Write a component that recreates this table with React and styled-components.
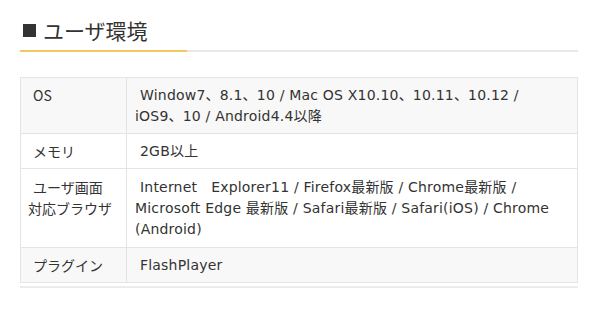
import React from "react";
import styled, { createGlobalStyle } from "styled-components";

const Global = createGlobalStyle`
  html, body { margin: 0; padding: 0; background: #ffffff; }
  body { font-family: "DejaVu Sans", "Noto Sans CJK JP", sans-serif; color: #333333; }
`;

const Page = styled.div`
  width: 558px;
  padding: 15px 0 0 20px;
`;

const Heading = styled.h2`
  display: flex;
  align-items: center;
  margin: 0;
  padding: 0 0 5px 3px;
  font-family: "Noto Sans CJK JP", sans-serif;
  font-weight: 400;
  font-size: 21px;
  line-height: 30px;
  color: #333333;
  white-space: nowrap;
`;

const Square = styled.span`
  display: inline-block;
  width: 13px;
  height: 13px;
  margin: 1px 7px 0 0;
  background: #333333;
`;

const Rule = styled.div`
  position: relative;
  height: 2px;
  background: #e8e8e8;
  &::before {
    content: "";
    position: absolute;
    left: 0;
    top: 0;
    height: 2px;
    width: 167px;
    background: #f5c760;
  }
`;

const Table = styled.table`
  margin-top: 25px;
  width: 558px;
  border-collapse: collapse;
  table-layout: fixed;
  font-size: 14px;
  line-height: 21px;
`;

const Row = styled.tr`
  background: ${(p) => (p.$shaded ? "#f8f8f8" : "#ffffff")};
`;

const Cell = styled.td`
  border: 1px solid #e4e4e4;
  padding: ${(p) => (p.$tall ? "8px" : "7px")} 8px ${(p) => (p.$tall ? "7px" : "6px")}
    ${(p) => (p.$label ? "7px" : "8px")};
  text-indent: 5px;
  vertical-align: top;
  white-space: nowrap;
  color: #333333;
  letter-spacing: ${(p) => (p.$label ? "0" : "0.2px")};
  font-family: ${(p) =>
    p.$label ? `"Noto Sans CJK JP", sans-serif` : `"DejaVu Sans", "Noto Sans CJK JP", sans-serif`};
`;

const Line = styled.span`
  display: block;
  height: 21px;
`;

const LabelCol = styled.col`
  width: 106px;
`;

const BottomLine = styled.div`
  margin-top: 3px;
  height: 2px;
  width: 558px;
  background: #ececec;
`;

const rows = [
  {
    label: "OS",
    value: ["Window7、8.1、10 / Mac OS X10.10、10.11、10.12 /", "iOS9、10 / Android4.4以降"],
    shaded: true,
  },
  { label: "メモリ", value: ["2GB以上"], shaded: false },
  {
    label: ["ユーザ画面", "対応ブラウザ"],
    value: [
      "Internet\u00a0\u00a0\u00a0Explorer11 / Firefox最新版 / Chrome最新版 /",
      "Microsoft Edge 最新版 / Safari最新版 / Safari(iOS) / Chrome",
      "(Android)",
    ],
    shaded: false,
    tall: true,
  },
  { label: "プラグイン", value: ["FlashPlayer"], shaded: true },
];

const lines = (arr) =>
  (Array.isArray(arr) ? arr : [arr]).map((t, i) => (
    <Line key={i} style={i > 0 ? { textIndent: 0 } : undefined}>
      {t}
    </Line>
  ));

export default function App() {
  return (
    <>
      <Global />
      <Page>
        <Heading>
          <Square />
          ユーザ環境
        </Heading>
        <Rule />
        <Table>
          <colgroup>
            <LabelCol />
            <col />
          </colgroup>
          <tbody>
            {rows.map((r, i) => (
              <Row key={i} $shaded={r.shaded}>
                <Cell $label $tall={r.tall}>{lines(r.label)}</Cell>
                <Cell $tall={r.tall}>{lines(r.value)}</Cell>
              </Row>
            ))}
          </tbody>
        </Table>
        <BottomLine />
      </Page>
    </>
  );
}
